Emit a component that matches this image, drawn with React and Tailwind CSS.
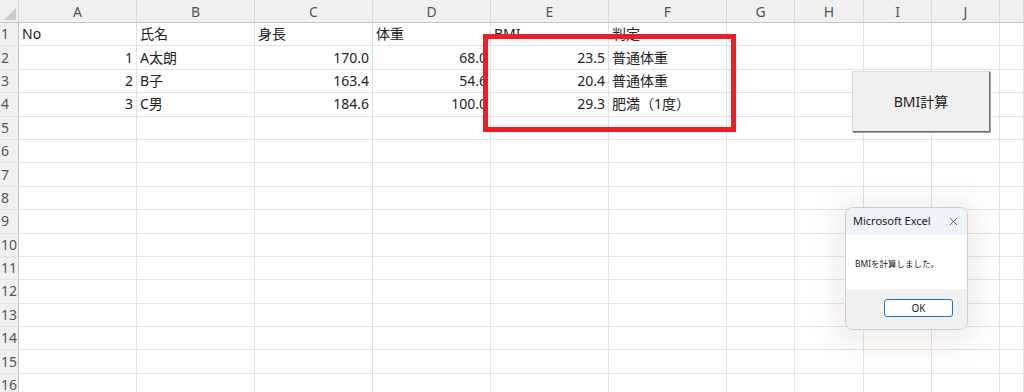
import { X } from 'lucide-react';

const cols = [
    { key: 'A', w: 'w-[118px]' },
    { key: 'B', w: 'w-[118px]' },
    { key: 'C', w: 'w-[118px]' },
    { key: 'D', w: 'w-[118px]' },
    { key: 'E', w: 'w-[118px]' },
    { key: 'F', w: 'w-[118px]' },
    { key: 'G', w: 'w-[68px]' },
    { key: 'H', w: 'w-[69px]' },
    { key: 'I', w: 'w-[68px]' },
    { key: 'J', w: 'w-[68px]' },
    { key: '', w: 'flex-1' },
];

// cell values, [text, align]
const data = {
    1: [['No'], ['氏名'], ['身長'], ['体重'], ['BMI'], ['判定']],
    2: [['1', 'r'], ['A太朗'], ['170.0', 'r'], ['68.0', 'r'], ['23.5', 'r'], ['普通体重']],
    3: [['2', 'r'], ['B子'], ['163.4', 'r'], ['54.6', 'r'], ['20.4', 'r'], ['普通体重']],
    4: [['3', 'r'], ['C男'], ['184.6', 'r'], ['100.0', 'r'], ['29.3', 'r'], ['肥満（1度）']],
};

const rows = Array.from({ length: 16 }, (_, i) => i + 1);

const font = "font-['Noto_Sans','Noto_Sans_CJK_JP',sans-serif]";

export default function App() {
    return (
        <div className={`relative w-[1024px] h-[392px] overflow-hidden bg-white text-[#222] ${font}`}>
            {/* column headers */}
            <div className="flex h-[23px] bg-[#f0f0f0] border-b border-[#c4c4c4]">
                <div className="w-[19px] border-r border-[#d4d4d4] flex items-end justify-end p-[2px]">
                    <svg width="12" height="12" viewBox="0 0 12 12">
                        <polygon points="12,0 12,12 0,12" fill="#c9c9c9" />
                    </svg>
                </div>
                {cols.map((c, i) => (
                    <div key={i} className={`${c.w} border-r border-[#d9d9d9] flex items-center justify-center text-[14px] text-[#555]`}>
                        {c.key}
                    </div>
                ))}
            </div>

            {/* rows */}
            {rows.map((r) => (
                <div key={r} className="flex h-[23.4px]">
                    <div className="w-[19px] bg-[#f0f0f0] border-r border-[#c4c4c4] border-b border-b-[#e2e2e2] flex items-center pl-[1px] text-[14px] text-[#555] leading-none">
                        {r}
                    </div>
                    {cols.map((c, i) => {
                        const cell = data[r]?.[i];
                        return (
                            <div
                                key={i}
                                className={`${c.w} border-r border-b border-[#e2e2e2] flex items-center px-[3px] text-[14px] leading-none whitespace-nowrap ${cell?.[1] === 'r' ? 'justify-end' : 'justify-start'}`}
                            >
                                {cell?.[0]}
                            </div>
                        );
                    })}
                </div>
            ))}

            {/* red highlight box */}
            <div className="absolute left-[483px] top-[34px] w-[253px] h-[98px] border-[5px] border-[#ee1c25]" />

            {/* macro button */}
            <button className="absolute left-[852px] top-[71px] w-[138px] h-[61px] bg-[#f0f0f0] border border-[#dcdcdc] border-r-[#6e6e6e] border-b-[#6e6e6e] shadow-[1px_1px_0_#a0a0a0] text-[14px] text-[#222]">
                BMI計算
            </button>

            {/* message box */}
            <div className="absolute left-[845px] top-[207px] w-[123px] h-[123px] rounded-[8px] overflow-hidden border border-[#cfcfcf] bg-white shadow-[0_4px_26px_10px_rgba(140,110,80,0.12)] flex flex-col">
                <div className="h-[27px] bg-[#eef2f9] flex items-center justify-between pl-[7px] pr-[7px]">
                    <span className="text-[11px] text-[#1a1a1a]">Microsoft Excel</span>
                    <X size={13} strokeWidth={1.3} className="text-[#222]" />
                </div>
                <div className="flex-1 flex items-center pl-[9px] pt-[4px] text-[8.5px] text-[#222] whitespace-nowrap">
                    BMIを計算しました。
                </div>
                <div className="h-[40px] bg-[#f0f0f0] flex items-start justify-end pr-[14px] pt-[10px]">
                    <button className="w-[69px] h-[18px] rounded-[3px] border border-[#1b72d0] bg-white text-[10px] text-[#222] flex items-center justify-center">
                        OK
                    </button>
                </div>
            </div>
        </div>
    );
}
